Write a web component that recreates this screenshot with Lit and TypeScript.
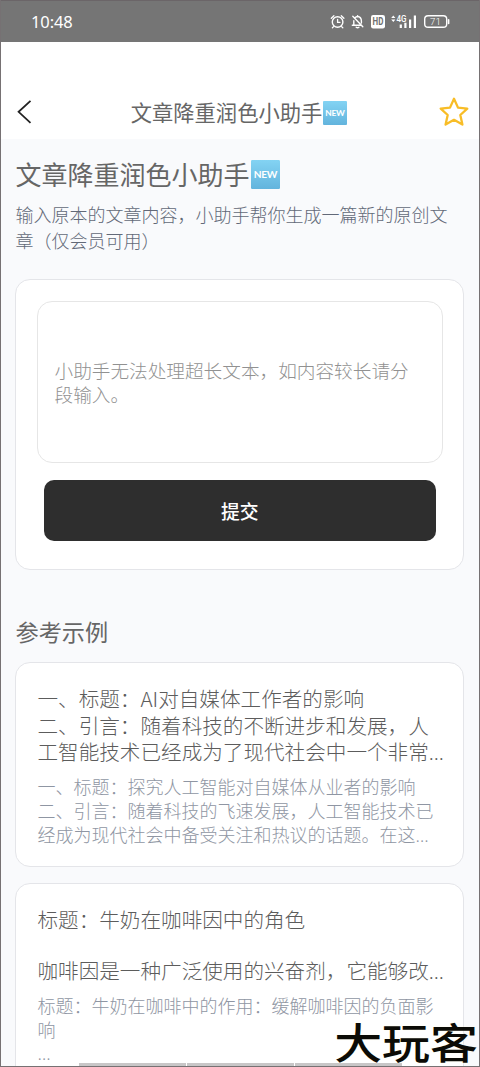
import { LitElement, html, css } from "lit";
import { customElement, property } from "lit/decorators.js";

@customElement("status-bar")
class StatusBar extends LitElement {
  static styles = css`
    :host {
      display: flex;
      justify-content: space-between;
      height: 42px;
      box-sizing: border-box;
      padding: 0 23px 0 30px;
      background: #757575;
      border-top: 1px solid #6b6568;
      color: #fff;
    }
    .time {
      font: 400 16.5px/41px "Noto Sans", "Noto Sans CJK SC", sans-serif;
      letter-spacing: -0.1px;
    }
    svg {
      display: block;
    }
  `;
  render() {
    return html`
      <span class="time">10:48</span>
      <svg width="126" height="41" viewBox="330 1 126 41" fill="none" stroke="#fff" stroke-width="1.4" stroke-linecap="round">
        <circle cx="337.6" cy="22" r="5.3"></circle>
        <path d="M337.6 19.3v3h2.4M331.3 18.2l2.6-2.5M343.9 18.2l-2.6-2.5M333.6 26.6l-1.2 1.2M341.6 26.6l1.2 1.2" stroke-width="1.3"></path>
        <path d="M352.3 25.2h9.3M353.8 25v-4.2M355 17.7q1-1.1 2.6-1.2q3.8.4 3.8 4.6v2M357.6 15.6v.8M356.2 27.2q1.4 1 2.7 0M352.8 16.2l10 10.6" stroke-width="1.4"></path>
        <rect x="371" y="15" width="14" height="13.4" rx="2.2" fill="#fff" stroke="none"></rect>
        <text x="378" y="25.3" text-anchor="middle" font-family="Roboto, sans-serif" font-size="10" font-weight="700" fill="#707070" stroke="none" textLength="10.8" lengthAdjust="spacingAndGlyphs">HD</text>
        <path d="M391.2 18l2.1-2.6 2.1 2.6zM391.2 19.4l2.1 2.6 2.1-2.6z" fill="#fff" stroke="none"></path>
        <text x="396.5" y="21.8" font-family="Roboto, sans-serif" font-size="9" font-weight="500" fill="#fff" stroke="none" textLength="10" lengthAdjust="spacingAndGlyphs">4G</text>
        <path d="M400.8 24.5v3.4M405.4 22.8v5.1M410.1 19.5v8.4M414.9 15.4v12.5" stroke-width="2.2" stroke-linecap="butt"></path>
        <rect x="424.7" y="15.7" width="22" height="11.6" rx="3.4"></rect>
        <path d="M448.6 19.8v3.6" stroke-width="1.6"></path>
        <text x="435.5" y="25" text-anchor="middle" font-family="Roboto, sans-serif" font-size="9.8" fill="#fff" stroke="none">71</text>
      </svg>
    `;
  }
}

@customElement("new-badge")
class NewBadge extends LitElement {
  @property({ type: Number }) size = 24;
  render() {
    return html`<svg width=${this.size} height=${this.size} viewBox="0 0 24 24">
      <defs>
        <linearGradient id="g" x1="0" y1="0" x2="0" y2="1">
          <stop offset="0" stop-color="#83d3f3"></stop>
          <stop offset="1" stop-color="#63b4dd"></stop>
        </linearGradient>
      </defs>
      <rect width="24" height="24" rx="1" fill="url(#g)"></rect>
      <text x="12" y="15" text-anchor="middle" font-family="Lato, sans-serif" font-weight="700" font-size="8.4" fill="#fff" textLength="19.6" lengthAdjust="spacing">NEW</text>
    </svg>`;
  }
  static styles = css`
    :host,
    svg {
      display: block;
    }
  `;
}

@customElement("example-card")
class ExampleCard extends LitElement {
  @property({ attribute: false }) source: string[] = [];
  @property({ attribute: false }) result: string[] = [];
  static styles = css`
    :host {
      display: block;
      box-sizing: border-box;
      height: 205px;
      padding: 22px 20px 0 21.5px;
      border: 1.5px solid #e4e5e9;
      border-radius: 15px;
      background: #fff;
      white-space: nowrap;
      flex: none;
    }
    .source {
      font-size: 20.6px;
      line-height: 26.7px;
      color: #5c5c5c;
    }
    .result {
      margin-top: 9px;
      font-size: 18px;
      line-height: 23.7px;
      color: #8f96a3;
    }
    .blank {
      height: 24.6px;
    }
    .dots {
      font-family: "Noto Sans", sans-serif;
    }
  `;
  private line(text: string) {
    if (!text) return html`<div class="blank"></div>`;
    const cut = text.endsWith("...");
    return html`<div class="line">${cut ? text.slice(0, -3) : text}${cut ? html`<span class="dots">…</span>` : ""}</div>`;
  }
  render() {
    return html`
      <div class="source">${this.source.map((t) => this.line(t))}</div>
      <div class="result">${this.result.map((t) => this.line(t))}</div>
    `;
  }
}

@customElement("app-root")
class AppRoot extends LitElement {
  static styles = css`
    :host {
      display: block;
      position: relative;
      box-sizing: border-box;
      width: 480px;
      height: 1067px;
      overflow: hidden;
      background: #f9fafc;
      color: #666;
      font-family: "Noto Sans CJK SC", sans-serif;
      font-weight: 300;
      border: 1px solid #767173;
      border-top: 0;
    }
    .nav {
      display: grid;
      grid-template-columns: 60px 1fr 60px;
      align-items: center;
      height: 97px;
      box-sizing: border-box;
      padding: 43px 9px 0 13px;
      background: #fff;
    }
    .nav-title {
      display: flex;
      align-items: center;
      justify-content: center;
      gap: 1px;
      padding-right: 6px;
      font-size: 21.3px;
      line-height: 32px;
      font-weight: 400;
      white-space: nowrap;
    }
    .nav-title new-badge {
      margin-top: 2px;
    }
    .star {
      justify-self: end;
    }
    .content {
      display: flex;
      flex-direction: column;
      padding: 18px 15px 0 14px;
    }
    .heading {
      display: flex;
      align-items: center;
      gap: 1.5px;
      height: 34px;
      margin-left: 0.5px;
      font-size: 26px;
      line-height: 34px;
      font-weight: 400;
    }
    .desc {
      margin: 10px 0 0 0.5px;
      font-size: 18px;
      line-height: 26px;
      color: #626978;
      white-space: nowrap;
    }
    .form {
      box-sizing: border-box;
      height: 291px;
      margin-top: 26px;
      padding: 20.5px 20.5px 0 21px;
      border: 1.5px solid #e4e5e9;
      border-radius: 15px;
      background: #fff;
    }
    .field {
      box-sizing: border-box;
      height: 162px;
      padding: 56px 16.5px;
      border: 1.5px solid #e6e6e6;
      border-radius: 15px;
      font-size: 18.65px;
      line-height: 24.8px;
      color: #919191;
      white-space: nowrap;
    }
    .submit {
      display: block;
      width: calc(100% - 13px);
      height: 61.5px;
      margin: 17px 6.5px 0;
      padding: 0;
      border: 0;
      border-radius: 10px;
      background: #2e2e2e;
      color: #fff;
      font: 500 18.8px/61px "Noto Sans CJK SC", sans-serif;
    }
    .section {
      margin: 44px 0 0 0.5px;
      font-size: 23.2px;
      line-height: 34px;
      font-weight: 400;
    }
    .cards {
      display: flex;
      flex-direction: column;
      gap: 16px;
      margin-top: 14px;
    }
    .toolbar {
      position: absolute;
      left: 78px;
      bottom: 0;
      display: flex;
      gap: 1px;
    }
    .seg {
      width: 107px;
      height: 3px;
      background: #c8c6c7;
    }
    .watermark {
      position: absolute;
      right: 1px;
      bottom: 2px;
      color: #0b0b06;
      font-size: 47px;
      line-height: 47px;
      font-weight: 500;
      white-space: nowrap;
      transform: scale(1.02, 0.9);
      transform-origin: right center;
      text-shadow: 0 0 2px #fffce8;
    }
  `;

  private examples = [
    {
      source: ["一、标题：AI对自媒体工作者的影响", "二、引言：随着科技的不断进步和发展，人", "工智能技术已经成为了现代社会中一个非常..."],
      result: ["一、标题：探究人工智能对自媒体从业者的影响", "二、引言：随着科技的飞速发展，人工智能技术已", "经成为现代社会中备受关注和热议的话题。在这..."],
    },
    {
      source: ["标题：牛奶在咖啡因中的角色", "", "咖啡因是一种广泛使用的兴奋剂，它能够改..."],
      result: ["标题：牛奶在咖啡中的作用：缓解咖啡因的负面影", "响", "..."],
    },
  ];

  render() {
    return html`
      <status-bar></status-bar>
      <div class="nav">
        <svg width="20" height="28" viewBox="0 0 20 28" fill="none" stroke="#222" stroke-width="1.8">
          <path d="M16.5 2.8L4.6 13.8L16.5 24.8"></path>
        </svg>
        <div class="nav-title">文章降重润色小助手<new-badge .size=${24}></new-badge></div>
        <svg class="star" width="32" height="32" viewBox="0 0 32 32" fill="none" stroke="#f8bd27" stroke-width="2.3" stroke-linejoin="round">
          <path d="M16 2.7L20 11.6L29.3 12.6L22.3 19L24.4 28.6L16 23.8L7.6 28.6L9.7 19L2.7 12.6L12 11.6Z"></path>
        </svg>
      </div>
      <div class="content">
        <div class="heading">文章降重润色小助手<new-badge .size=${29}></new-badge></div>
        <div class="desc">输入原本的文章内容，小助手帮你生成一篇新的原创文<br />章（仅会员可用）</div>
        <div class="form">
          <div class="field">小助手无法处理超长文本，如内容较长请分<br />段输入。</div>
          <button class="submit">提交</button>
        </div>
        <div class="section">参考示例</div>
        <div class="cards">
          ${this.examples.map((e) => html`<example-card .source=${e.source} .result=${e.result}></example-card>`)}
        </div>
      </div>
      <div class="toolbar"><div class="seg"></div><div class="seg"></div><div class="seg"></div></div>
      <div class="watermark">大玩客</div>
    `;
  }
}
